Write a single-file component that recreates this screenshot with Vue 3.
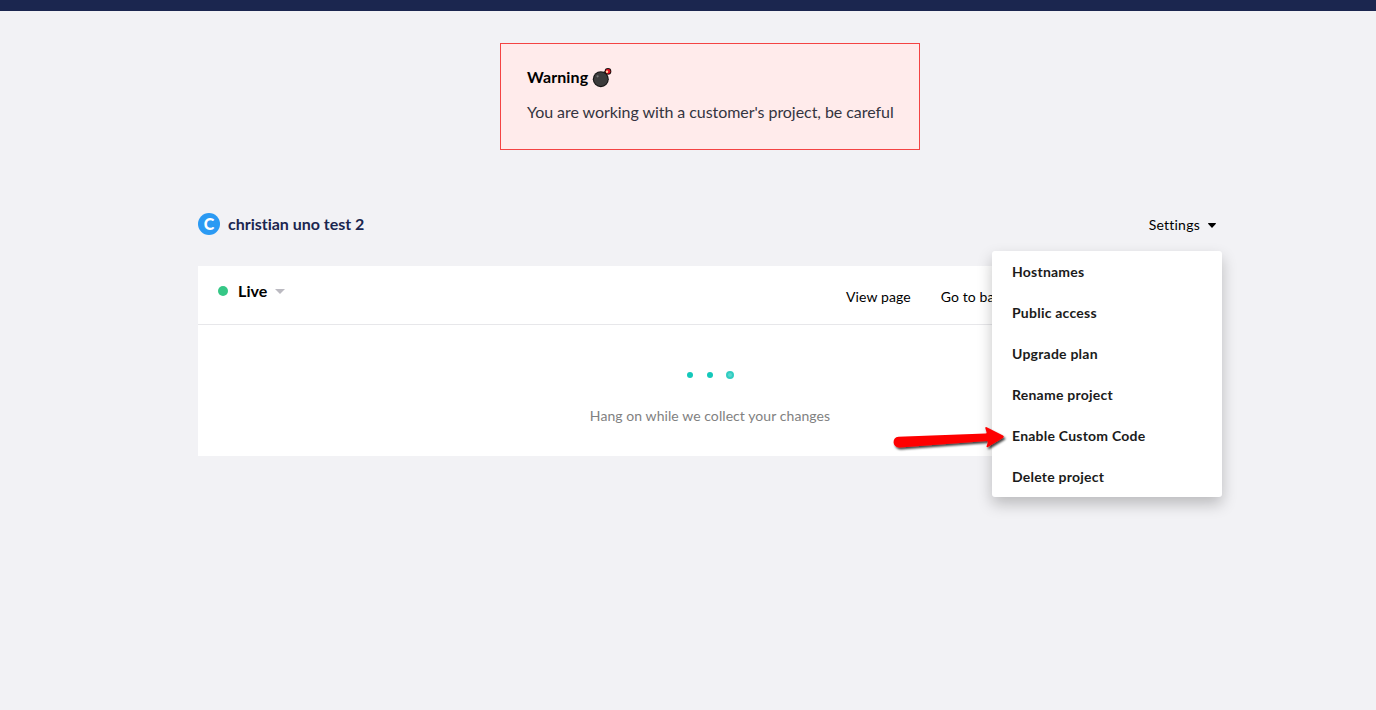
<script setup>
const menuItems = [
  'Hostnames',
  'Public access',
  'Upgrade plan',
  'Rename project',
  'Enable Custom Code',
  'Delete project',
]
</script>

<template>
  <div class="page">
    <header class="topbar"></header>
    <section class="warning">
      <h2 class="warning-title">
        <span>Warning</span>
        <svg class="bomb" width="20" height="20" viewBox="0 0 20 20">
          <path d="M11.5 6.5 15.5 3.5" stroke="#17110f" stroke-width="4" />
          <path d="M12.5 5.8 15 4" stroke="#f5c9a0" stroke-width="1.8" />
          <circle cx="8.8" cy="11.2" r="8" fill="#161616" />
          <circle cx="8.8" cy="11.2" r="6.9" fill="#3b3b3b" />
          <circle cx="5.6" cy="8.3" r="1.1" fill="#777" />
          <circle cx="16" cy="3.4" r="3.3" fill="#1c0f0d" />
          <circle cx="16" cy="3.4" r="2.4" fill="#e81123" />
          <circle cx="15" cy="3.8" r="1.2" fill="#ffd29b" />
        </svg>
      </h2>
      <p class="warning-text">You are working with a customer's project, be careful</p>
    </section>

    <main class="project">
      <div class="project-head">
        <span class="avatar">C</span>
        <h1 class="project-name">christian uno test 2</h1>
        <div class="settings">
          <span>Settings</span>
          <svg width="8" height="5" viewBox="0 0 8 5"><path d="M0 0.4Q0 0 .5 0H7.5Q8 0 8 .4Q8 .7 7.7 1L4.5 4.6Q4 5 3.5 4.6L.3 1Q0 .7 0 .4Z" fill="#000" /></svg>
          <nav class="menu">
            <a v-for="item in menuItems" :key="item" class="menu-item">{{ item }}</a>
          </nav>
        </div>
      </div>

      <section class="card">
        <div class="card-head">
          <div class="environment">
            <i class="status"></i>
            <span>Live</span>
            <svg width="10" height="5" viewBox="0 0 10 5"><path d="M0 0H10L5 5Z" fill="#bbbac1" /></svg>
          </div>
          <div class="actions">
            <a>View page</a>
            <a>Go to backoffice</a>
          </div>
        </div>
        <div class="card-body">
          <div class="loader"><i class="dot"></i><i class="dot"></i><i class="dot growing"></i></div>
          <p class="loading-text">Hang on while we collect your changes</p>
        </div>
      </section>
    </main>

    <svg class="arrow" width="140" height="40" viewBox="0 0 140 40">
      <defs>
        <filter id="arrow-shadow" x="-10%" y="-30%" width="120%" height="180%">
          <feDropShadow dx="1.5" dy="2" stdDeviation="1.3" flood-color="#000" flood-opacity=".75" />
        </filter>
      </defs>
      <path
        d="M18.5 15.7 105.5 12.6Q107 12.5 106.6 11.2L105.3 7.2Q105.2 5.6 106.7 6.2L123 14.6Q124.6 15.6 123.2 16.8L108 26Q106.5 26.7 106.5 25.2L107.8 21.4Q108 20 106.5 20L19.5 26.4C12 26.8 11.6 16 18.5 15.7Z"
        fill="#fe0000"
        filter="url(#arrow-shadow)"
      />
    </svg>
  </div>
</template>

<style>
body {
  margin: 0;
  background: #f2f2f5;
}
</style>

<style scoped>
.page {
  position: relative;
  box-sizing: border-box;
  height: 710px;
  overflow: hidden;
  background: #f2f2f5;
  color: #000;
  font-family: Lato, "Liberation Sans", sans-serif;
  font-variant-ligatures: none;
}
.topbar {
  height: 11px;
  background: #1b264f;
}
.warning {
  box-sizing: border-box;
  width: 420px;
  height: 107px;
  margin: 32px 0 0 500px;
  padding: 22px 26px;
  border: 1px solid #f44343;
  background: #ffebeb;
}
.warning-title {
  display: flex;
  align-items: center;
  gap: 4px;
  height: 22px;
  margin: 0;
  font-size: 16px;
  font-weight: 700;
  letter-spacing: 0.1px;
}
.warning-title span {
  margin-top: -2px;
}
.bomb {
  flex: none;
  margin-top: 1px;
}
.warning-text {
  margin: 12px 0 0;
  color: #343440;
  font-size: 16px;
  letter-spacing: -0.055px;
  line-height: 24px;
  white-space: nowrap;
}
.project {
  width: 1024px;
  margin: 58px 0 0 198px;
}
.project-head {
  display: flex;
  align-items: center;
  height: 32px;
}
.avatar {
  width: 22px;
  height: 22px;
  border-radius: 50%;
  background: #2b9af3;
  color: #fff;
  font-size: 16px;
  font-weight: 900;
  line-height: 22px;
  text-align: center;
}
.project-name {
  margin: -2px 0 0 8px;
  color: #1b264f;
  font-size: 16px;
  font-weight: 700;
  letter-spacing: -0.01px;
}
.settings {
  position: relative;
  display: flex;
  align-items: center;
  gap: 8px;
  margin-left: auto;
  padding: 0 6px 0 0;
  font-size: 14px;
  letter-spacing: 0.24px;
}
.settings > svg {
  margin-top: 2px;
}
.menu {
  position: absolute;
  z-index: 2;
  top: 35px;
  right: 0;
  width: 230px;
  border-radius: 3px;
  background: #fff;
  box-shadow: 0 7px 15px rgba(0, 0, 0, 0.23);
}
.menu-item {
  display: block;
  height: 41px;
  padding-left: 20px;
  color: #1b1b1b;
  font-size: 14px;
  font-weight: 700;
  letter-spacing: 0.23px;
  line-height: 41px;
}
.card {
  height: 190px;
  margin-top: 26px;
  background: #fff;
}
.card-head {
  display: flex;
  box-sizing: border-box;
  height: 59px;
  padding: 0 20px;
  border-bottom: 1px solid #e7e7ea;
}
.environment {
  display: flex;
  align-items: center;
  height: 50px;
  font-size: 16px;
  font-weight: 700;
  letter-spacing: 0.1px;
}
.environment span {
  margin-top: -2px;
}
.environment svg {
  margin-left: 7.6px;
}
.status {
  width: 10px;
  height: 10px;
  margin-right: 10px;
  border-radius: 50%;
  background: #35c786;
}
.actions {
  display: flex;
  gap: 30px;
  width: 356px;
  margin-left: auto;
  font-size: 14px;
  letter-spacing: 0.1px;
  line-height: 62px;
  white-space: nowrap;
}
.card-body {
  display: flex;
  flex-direction: column;
  align-items: center;
  padding-top: 45px;
}
.loader {
  display: flex;
  align-items: center;
  justify-content: center;
  height: 10px;
}
.dot {
  width: 6px;
  height: 6px;
  margin: 0 7px;
  border-radius: 50%;
  background: #14c8ba;
}
.growing {
  box-sizing: border-box;
  width: 8px;
  height: 8px;
  margin: 0 6px;
  border: 2px solid #31cdc1;
  background: #5bd7ce;
}
.loading-text {
  margin: 25px 0 0;
  color: #818181;
  font-size: 14px;
  letter-spacing: 0.07px;
  line-height: 22px;
}
.arrow {
  position: absolute;
  z-index: 3;
  top: 421px;
  left: 880px;
}
</style>
